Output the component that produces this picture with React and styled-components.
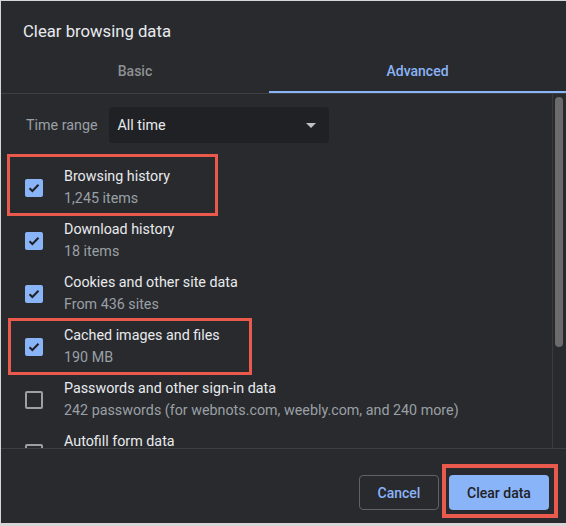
import React from "react";
import styled, { createGlobalStyle, css } from "styled-components";

const Global = createGlobalStyle`
  html, body { margin: 0; padding: 0; }
  body {
    background: #d6d6d6;
    font-family: Roboto, "Liberation Sans", Arial, sans-serif;
    -webkit-font-smoothing: antialiased;
  }
`;

const Dialog = styled.div`
  margin: 1px 0 0 1px;
  width: 565px;
  height: 522px;
  background: #292a2d;
  display: flex;
  flex-direction: column;
  color: #e8eaed;
  overflow: hidden;
`;

const Title = styled.h1`
  margin: 0;
  padding: 21px 0 7px 22px;
  font-size: 16.7px;
  line-height: 20px;
  font-weight: 400;
  color: #e8eaed;
`;

const Tabs = styled.div`
  display: grid;
  grid-template-columns: 268px 1fr;
  height: 44px;
  border-bottom: 1px solid #3c4043;
`;

const Tab = styled.div`
  display: flex;
  align-items: center;
  justify-content: center;
  font-size: 14px;
  font-weight: 500;
  color: ${(p) => (p.$active ? "#8ab4f8" : "#8d9094")};
  ${(p) =>
    p.$active &&
    css`
      box-shadow: inset 0 -2px 0 #8ab4f8;
    `}
`;

const ScrollArea = styled.div`
  position: relative;
  height: 354px;
  overflow: hidden;
`;

const Track = styled.div`
  position: absolute;
  top: 0;
  right: 0;
  bottom: 0;
  width: 13px;
  border-left: 1px solid #3a3b3e;
  background: #292a2d;
`;

const Thumb = styled.div`
  position: absolute;
  top: 3px;
  left: 2px;
  width: 8px;
  height: 250px;
  border-radius: 4px;
  background: #6b6b6b;
`;

const Content = styled.div`
  padding: 13px 14px 10px 0;
`;

const RangeRow = styled.div`
  display: flex;
  align-items: center;
  gap: 11px;
  padding-left: 25px;
  margin-bottom: 18px;
`;

const RangeLabel = styled.span`
  font-size: 14.3px;
  color: #9aa0a6;
`;

const Select = styled.div`
  width: 220px;
  height: 36px;
  box-sizing: border-box;
  background: #202124;
  border-radius: 4px;
  display: flex;
  align-items: center;
  justify-content: space-between;
  padding: 0 9px 0 9px;
  font-size: 14.3px;
  color: #e8eaed;
`;

const Caret = styled.span`
  width: 0;
  height: 0;
  border-left: 5px solid transparent;
  border-right: 5px solid transparent;
  border-top: 5px solid #bdc1c6;
  margin-right: 4px;
`;

const Row = styled.div`
  position: relative;
  display: flex;
  align-items: center;
  height: 53px;
  padding-left: 24px;
  box-sizing: border-box;
  ${(p) =>
    p.$box &&
    css`
      &::after {
        content: "";
        position: absolute;
        left: ${p.$box.left}px;
        top: ${p.$box.top}px;
        width: ${p.$box.width}px;
        height: ${p.$box.height}px;
        border: 3px solid #e95a4c;
        box-sizing: border-box;
        pointer-events: none;
      }
    `}
`;

const Check = styled.span`
  width: 18px;
  height: 18px;
  box-sizing: border-box;
  border-radius: 2px;
  flex: none;
  display: flex;
  align-items: center;
  justify-content: center;
  ${(p) =>
    p.$on
      ? css`
          background: #8ab4f8;
        `
      : css`
          border: 2px solid #9aa0a6;
        `}
`;

const Texts = styled.div`
  margin-left: 21px;
  display: flex;
  flex-direction: column;
  white-space: nowrap;
`;

const ItemTitle = styled.span`
  font-size: 14.3px;
  line-height: 21px;
  color: #e8eaed;
`;

const ItemSub = styled.span`
  font-size: 14.3px;
  line-height: 22px;
  color: #9aa0a6;
`;

const Footer = styled.div`
  border-top: 1px solid #3c4043;
  display: flex;
  justify-content: flex-end;
  gap: 10px;
  padding: 26px 17px 0 0;
  flex: 1;
`;

const Button = styled.button`
  position: relative;
  height: 35px;
  box-sizing: border-box;
  border-radius: 4px;
  font-family: inherit;
  font-size: 14px;
  font-weight: 500;
  padding: 0;
  cursor: pointer;
  ${(p) =>
    p.$primary
      ? css`
          width: 100px;
          background: #8ab4f8;
          border: none;
          color: #202124;
        `
      : css`
          width: 80px;
          background: transparent;
          border: 1px solid #5f6368;
          color: #8ab4f8;
        `}
  ${(p) =>
    p.$marked &&
    css`
      &::after {
        content: "";
        position: absolute;
        left: -7px;
        top: -11px;
        right: -9px;
        bottom: -8px;
        border: 4px solid #e95a4c;
        pointer-events: none;
      }
    `}
`;

const CheckMark = () => (
  <svg width="12" height="10" viewBox="0 0 12 10">
    <path d="M1.5 5.2 L4.4 8 L10.5 1.8" fill="none" stroke="#202124" strokeWidth="2" />
  </svg>
);

const items = [
  { t: "Browsing history", s: "1,245 items", on: true, box: { left: 6, top: -7, width: 211, height: 62 } },
  { t: "Download history", s: "18 items", on: true },
  { t: "Cookies and other site data", s: "From 436 sites", on: true },
  { t: "Cached images and files", s: "190 MB", on: true, box: { left: 7, top: -2, width: 244, height: 57 } },
  { t: "Passwords and other sign-in data", s: "242 passwords (for webnots.com, weebly.com, and 240 more)", on: false },
  { t: "Autofill form data", s: "", on: false },
  { t: "Site settings", s: "None", on: false },
  { t: "Hosted app data", s: "1 app (Web Store)", on: false },
];

export default function App() {
  return (
    <>
      <Global />
      <Dialog>
        <Title>Clear browsing data</Title>
        <Tabs>
          <Tab>Basic</Tab>
          <Tab $active>Advanced</Tab>
        </Tabs>
        <ScrollArea>
          <Content>
            <RangeRow>
              <RangeLabel>Time range</RangeLabel>
              <Select>
                All time
                <Caret />
              </Select>
            </RangeRow>
            {items.map((it) => (
              <Row key={it.t} $box={it.box}>
                <Check $on={it.on}>{it.on && <CheckMark />}</Check>
                <Texts>
                  <ItemTitle>{it.t}</ItemTitle>
                  <ItemSub>{it.s || "\u00a0"}</ItemSub>
                </Texts>
              </Row>
            ))}
          </Content>
          <Track>
            <Thumb />
          </Track>
        </ScrollArea>
        <Footer>
          <Button>Cancel</Button>
          <Button $primary $marked>Clear data</Button>
        </Footer>
      </Dialog>
    </>
  );
}
